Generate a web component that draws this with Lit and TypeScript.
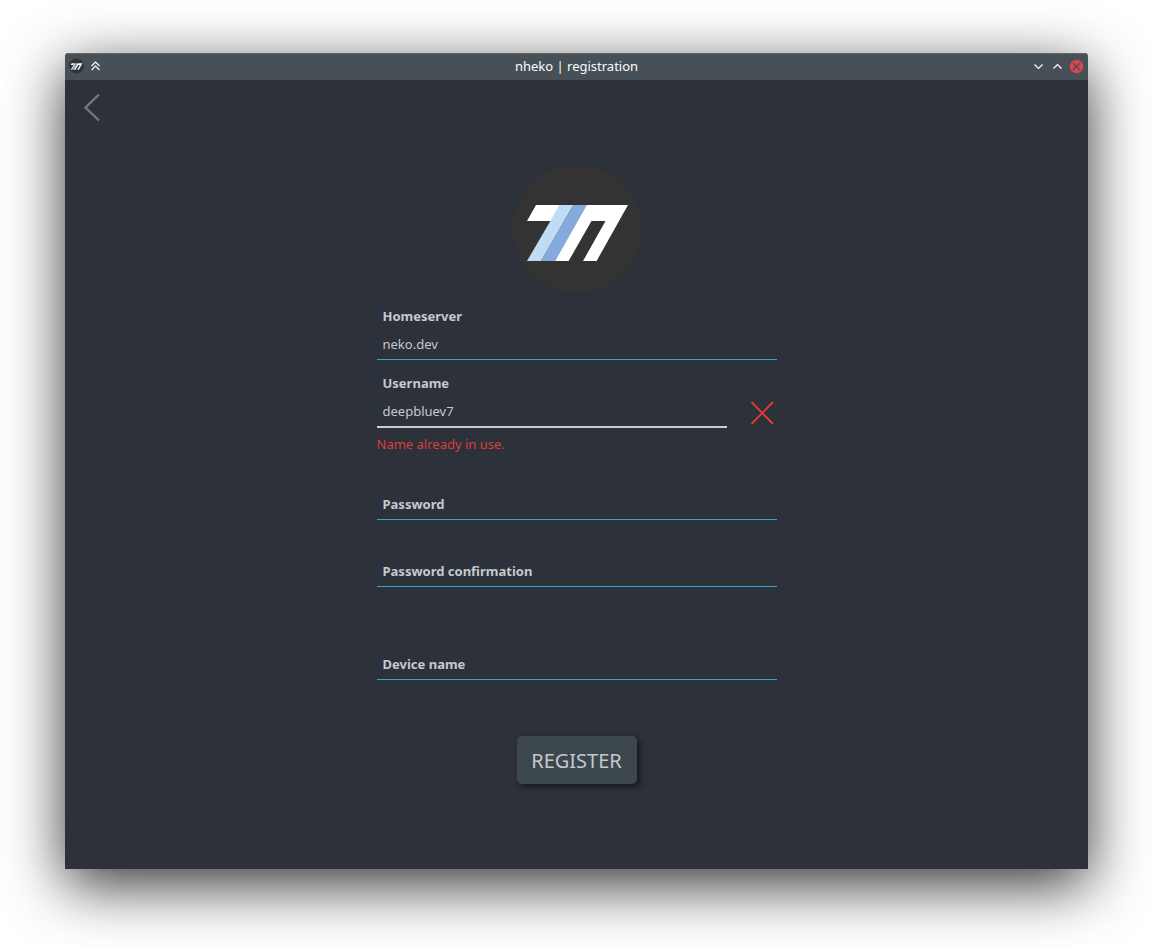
import { LitElement, html, svg, css } from "lit";
import { customElement, property } from "lit/decorators.js";

const logoShapes = svg`
  <circle cx="64" cy="64" r="64" fill="#333333" />
  <path d="M23 40H47L38 56H14Z" fill="#fff" />
  <path d="M46.7 40H60.4L28 96H14Z" fill="#c0dcf5" />
  <path d="M60.3 40H74L42 96H28Z" fill="#87aade" />
  <path d="M73.8 40H115L83.6 96H70L92.5 56H78.5L55.6 96H42Z" fill="#fff" />
`;

@customElement("form-field")
class FormField extends LitElement {
  @property() label = "";
  @property() value = "";
  @property() type = "text";
  @property() error = "";
  @property({ type: Boolean }) checked = false;

  static styles = css`
    :host {
      display: block;
    }
    .row {
      display: flex;
      align-items: flex-end;
      gap: 20px;
    }
    .field {
      flex: 1;
      min-width: 0;
      display: grid;
      grid-template-rows: 20px 34px;
      grid-template-columns: 1fr;
    }
    label {
      grid-area: 1 / 1;
      padding: 0 6px;
      font-size: 13px;
      font-weight: 700;
      line-height: 20px;
      pointer-events: none;
    }
    .empty label {
      grid-area: 2 / 1;
      padding-top: 8px;
    }
    input {
      grid-area: 2 / 1;
      box-sizing: border-box;
      width: 100%;
      height: 34px;
      margin: 0;
      padding: 3px 6px 0;
      border: 0;
      border-bottom: 1px solid #3a9fd5;
      border-radius: 0;
      outline: 0;
      background: transparent;
      color: inherit;
      font: inherit;
      font-size: 13px;
    }
    .invalid input {
      border-bottom-color: #caccd1;
      box-shadow: 0 1px #caccd1;
    }
    .mark {
      width: 30px;
      height: 28px;
    }
    .error {
      margin: 8px 0 0;
      height: 18px;
      line-height: 18px;
      color: #dd3d3d;
    }
  `;

  render() {
    return html`
      <div class="row">
        <div class="field ${this.value ? "" : "empty"} ${this.error ? "invalid" : ""}">
          <label for="box">${this.label}</label>
          <input id="box" type=${this.type} .value=${this.value} />
        </div>
        ${this.error
          ? html`<svg class="mark" viewBox="0 0 30 28" fill="none" stroke="#e83a35" stroke-width="1.8" aria-hidden="true">
              <path d="M4.5 3L26 25M26 3L4.5 25" />
            </svg>`
          : ""}
      </div>
      ${this.checked ? html`<p class="error">${this.error}</p>` : ""}
    `;
  }
}

@customElement("app-root")
class AppRoot extends LitElement {
  static styles = css`
    :host {
      display: flex;
      box-sizing: border-box;
      min-height: 100vh;
      padding: 53px 65px 77px;
      background: #fff;
      color: #c6c9d0;
      font-family: "Noto Sans", sans-serif;
      font-size: 13px;
    }
    .window {
      flex: 1;
      min-width: 0;
      display: flex;
      flex-direction: column;
      border-radius: 4px 4px 0 0;
      background: #2d3139;
      box-shadow: 0 16px 60px rgba(0, 0, 0, 0.8);
    }
    .titlebar {
      display: grid;
      grid-template-columns: 1fr auto 1fr;
      align-items: center;
      height: 27px;
      padding: 0 4px 2px;
      box-sizing: border-box;
      border-radius: 4px 4px 0 0;
      background: #475057;
      box-shadow: inset 0 1px #5f686f;
      color: #fcfcfc;
    }
    h1 {
      margin: 0;
      font-size: 13px;
      font-weight: 400;
      line-height: 18px;
    }
    .group {
      display: flex;
      gap: 3px;
    }
    .end {
      justify-content: flex-end;
    }
    button {
      margin: 0;
      padding: 0;
      border: 0;
      background: none;
      color: inherit;
      font: inherit;
    }
    .tool,
    .tool svg {
      display: block;
      width: 16px;
      height: 16px;
    }
    .back,
    .back svg {
      display: block;
      width: 54px;
      height: 54px;
    }
    form {
      box-sizing: border-box;
      width: 400px;
      max-width: 100%;
      margin: 31px auto 0;
      display: flex;
      flex-direction: column;
      gap: 13px;
    }
    .logo {
      align-self: center;
      width: 128px;
      height: 128px;
    }
    .register {
      align-self: center;
      width: 120px;
      height: 48px;
      margin: 43px 0 40px;
      border-radius: 5px;
      background: #3b474d;
      box-shadow: 3px 3px 6px rgba(0, 0, 0, 0.55);
      font-size: 20px;
    }
  `;

  render() {
    return html`
      <main class="window">
        <header class="titlebar">
          <div class="group">
            <button class="tool" aria-label="Window menu">
              <svg viewBox="0 -4 136 136">${logoShapes}</svg>
            </button>
            <button class="tool" aria-label="Keep above">
              <svg viewBox="0 0 16 16" fill="none" stroke="#fcfcfc" stroke-width="1.2">
                <path d="M3.5 8L7.5 4L11.5 8M3.5 12L7.5 8L11.5 12" />
              </svg>
            </button>
          </div>
          <h1>nheko | registration</h1>
          <div class="group end">
            <button class="tool" aria-label="Minimize">
              <svg viewBox="0 0 16 16" fill="none" stroke="#fcfcfc" stroke-width="1.2">
                <path d="M4.5 6.5L8.5 10.5L12.5 6.5" />
              </svg>
            </button>
            <button class="tool" aria-label="Maximize">
              <svg viewBox="0 0 16 16" fill="none" stroke="#fcfcfc" stroke-width="1.2">
                <path d="M4.5 10.5L8.5 6.5L12.5 10.5" />
              </svg>
            </button>
            <button class="tool" aria-label="Close">
              <svg viewBox="0 0 16 16" fill="none" stroke="#475057" stroke-width="1.2">
                <circle cx="8.5" cy="8.5" r="6.8" fill="#da4453" stroke="none" />
                <path d="M5 5L12 12M12 5L5 12" />
              </svg>
            </button>
          </div>
        </header>
        <button class="back" aria-label="Back">
          <svg viewBox="0 0 54 54" fill="none" stroke="#74777c" stroke-width="2.4">
            <path d="M34 14.5L20.5 27.5L34 40.5" />
          </svg>
        </button>
        <form>
          <svg class="logo" viewBox="0 0 128 128" role="img" aria-label="nheko">${logoShapes}</svg>
          <form-field label="Homeserver" value="neko.dev"></form-field>
          <form-field label="Username" value="deepbluev7" error="Name already in use." checked></form-field>
          <form-field label="Password" type="password"></form-field>
          <form-field label="Password confirmation" type="password" checked></form-field>
          <form-field label="Device name"></form-field>
          <button class="register" type="button">REGISTER</button>
        </form>
      </main>
    `;
  }
}
